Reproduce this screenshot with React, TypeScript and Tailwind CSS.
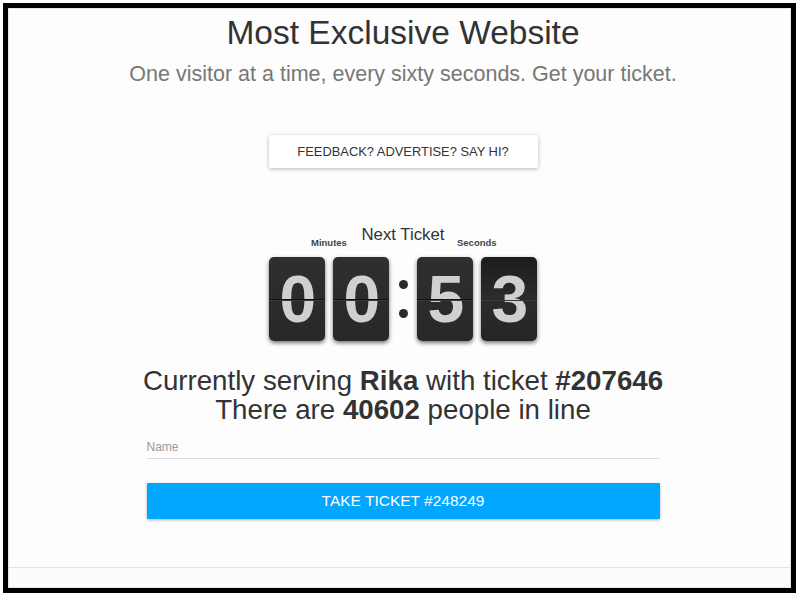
import React from "react";

const font = { fontFamily: '"Liberation Sans", Arial, sans-serif' };

function Card({ d, flip }: { d: string; flip?: boolean }) {
  return (
    <div
      className={`relative w-[56px] h-[84px] rounded-[5px] flex items-center justify-center overflow-hidden shadow-[0_2px_4px_rgba(0,0,0,0.55)] ${
        flip ? "bg-gradient-to-b from-[#1c1c1c] via-[#2c2c2c] to-[#252525]" : "bg-gradient-to-b from-[#2f2f2f] to-[#282828]"
      }`}
    >
      <span className="text-[66px] font-bold leading-none text-[#d0d0d0] tracking-tight" style={font}>
        {d}
      </span>
      {!flip && <div className="absolute left-0 right-0 top-[42px] h-px bg-[#111]" />}
      <div className="absolute left-0 right-0 top-[43px] h-px bg-[#3a3a3a]" />
    </div>
  );
}

export default function App() {
  return (
    <div className="w-[800px] h-[597px] bg-white relative overflow-hidden" style={font}>
      <div className="absolute left-[3px] top-[3px] w-[793px] h-[590px] border-[5px] border-black bg-white">
        <div className="w-full h-full border border-[#e6e6e6] bg-[#fdfdfd] flex flex-col">
          <div className="flex-1 flex flex-col items-center pl-[7px]">
            <h1 className="mt-[4px] text-[33.5px] leading-[40px] text-[#333]">Most Exclusive Website</h1>
            <p className="mt-[9px] text-[21.5px] leading-[24px] text-[#777]">
              One visitor at a time, every sixty seconds. Get your ticket.
            </p>
            <button className="mt-[49px] w-[269px] h-[33px] bg-white text-[12.9px] text-[#333] shadow-[0_1px_4px_rgba(0,0,0,0.28)] rounded-[2px]">
              FEEDBACK? ADVERTISE? SAY HI?
            </button>
            <div className="mt-[57px] relative w-[268px]">
              <div className="text-center text-[16.8px] leading-[20px] text-[#333]">Next Ticket</div>
              <div className="absolute left-[42px] top-[11px] text-[9.5px] font-bold text-[#444]">Minutes</div>
              <div className="absolute left-[188px] top-[11px] text-[9.5px] font-bold text-[#444]">Seconds</div>
              <div className="mt-[12px] flex items-start">
                <Card d="0" />
                <div className="w-[8px]" />
                <Card d="0" />
                <div className="w-[28px] h-[84px] flex flex-col items-center justify-center gap-[20px]">
                  <div className="w-[9px] h-[9px] rounded-full bg-[#2a2a2a]" />
                  <div className="w-[9px] h-[9px] rounded-full bg-[#2a2a2a]" />
                </div>
                <Card d="5" />
                <div className="w-[8px]" />
                <Card d="3" flip />
              </div>
            </div>
            <div className="mt-[25px] text-center text-[27.7px] leading-[29px] text-[#333]">
              <div>
                Currently serving <b>Rika</b> with ticket <b>#207646</b>
              </div>
              <div>
                There are <b>40602</b> people in line
              </div>
            </div>
            <div className="mt-[14px] w-[513px] border-b border-[#ddd] pb-[2px] text-[12px] leading-[18px] text-[#999]">Name</div>
            <button className="mt-[24px] w-[513px] h-[36px] bg-[#00a6ff] text-white text-[15.5px] shadow-[0_1px_3px_rgba(0,0,0,0.3)] rounded-[1px]">
              TAKE TICKET #248249
            </button>
          </div>
          <div className="h-[20px] border-t border-[#e4e4e4] bg-[#fcfcfc]" />
        </div>
      </div>
    </div>
  );
}
